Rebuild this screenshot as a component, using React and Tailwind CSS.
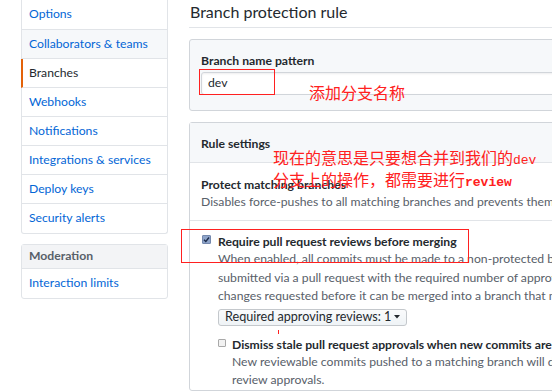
const sideItems = [
  { label: 'Options', first: true },
  { label: 'Collaborators & teams', hover: true },
  { label: 'Branches', active: true },
  { label: 'Webhooks' },
  { label: 'Notifications' },
  { label: 'Integrations & services' },
  { label: 'Deploy keys' },
  { label: 'Security alerts' },
];

const font = { fontFamily: 'Lato, "Noto Sans CJK SC", sans-serif' };

const App = () => {
  return (
    <div
      className="relative w-[552px] h-[391px] overflow-hidden bg-white text-[#24292e] text-[12.2px]"
      style={font}
    >
      <div className="flex">
        {/* sidebar */}
        <div className="ml-[21px] w-[147px] shrink-0">
          <div className="border-x border-b border-[#e1e4e8] rounded-b-[3px]">
            {sideItems.map((item) => (
              <div
                key={item.label}
                className={`${item.first ? 'h-[30px]' : 'h-[29px]'} flex items-center border-b border-[#e1e4e8] last:border-b-0 ${
                  item.active
                    ? 'border-l-2 border-l-[#e36209] -ml-px pl-[6px] text-[#24292e]'
                    : 'pl-[7px] text-[#0366d6]'
                } ${item.hover ? 'bg-[#f6f8fa]' : ''}`}
              >
                {item.label}
              </div>
            ))}
          </div>

          <div className="mt-[10px] border border-[#e1e4e8] rounded-[3px]">
            <div className="h-[24px] flex items-center pl-[7px] bg-[#f3f4f6] border-b border-[#e1e4e8] font-bold text-[#586069]">
              Moderation
            </div>
            <div className="h-[29px] flex items-center pl-[7px] text-[#0366d6]">Interaction limits</div>
          </div>
        </div>

        {/* main */}
        <div className="ml-[21px] w-[420px] shrink-0">
          <div className="h-[28px] border-b border-[#e1e4e8] flex items-end pb-[4px]">
            <h2 className="text-[16px] leading-[22px] ml-px">Branch protection rule</h2>
          </div>

          <div className="mt-[11px] h-[72px] border border-[#d1d5da] rounded-[3px] bg-[#f6f8fa] px-[11px] pt-[13px]">
            <div className="font-bold leading-[16px]">Branch name pattern</div>
            <div className="mt-[3px] h-[23px] bg-white border border-[#d1d5da] rounded-[3px] shadow-[inset_0_1px_2px_rgba(27,31,35,0.075)] flex items-center pl-[6px]">
              dev
            </div>
          </div>

          <div className="mt-[11px] border border-[#d1d5da] rounded-[3px]">
            <div className="h-[40px] bg-[#f6f8fa] border-b border-[#e1e4e8] flex items-center pl-[11px] pt-[4px] font-bold">
              Rule settings
            </div>
            <div className="px-[11px] pt-[13px] pb-[10px] border-b border-[#e1e4e8]">
              <div className="font-bold leading-[17px]">Protect matching branches</div>
              <div className="text-[#586069] leading-[17px] whitespace-nowrap">
                Disables force-pushes to all matching branches and prevents them from being deleted.
              </div>
            </div>
            <div className="pl-[12px] pt-[12px]">
              <div className="flex">
                <div className="mt-[2px] w-[9px] h-[9px] rounded-[1px] bg-[#8ea4c9] border border-[#7488ad] flex items-center justify-center shrink-0">
                  <svg width="7" height="7" viewBox="0 0 7 7">
                    <path d="M1 3.8 L2.8 5.5 L6 1.5" stroke="#1b2b4a" strokeWidth="1.4" fill="none" />
                  </svg>
                </div>
                <div className="ml-[7px]">
                  <div className="font-bold leading-[17px]">Require pull request reviews before merging</div>
                  <div className="text-[#586069] leading-[18.5px] whitespace-nowrap">
                    <div>When enabled, all commits must be made to a non-protected branch and</div>
                    <div>submitted via a pull request with the required number of approving reviews and no</div>
                    <div>changes requested before it can be merged into a branch that matches this rule.</div>
                  </div>
                  <div className="mt-[3px] inline-flex items-center h-[17px] px-[6px] border border-[#c4c8cc] rounded-[3px] bg-gradient-to-b from-[#fafbfc] to-[#eff3f6] text-[#24292e] text-[12.6px]">
                    Required approving reviews: 1
                    <svg className="ml-[3px]" width="6" height="4" viewBox="0 0 6 4">
                      <path d="M0 0 L6 0 L3 3.5 Z" fill="#24292e" />
                    </svg>
                  </div>
                  <div className="mt-[10px] flex">
                    <div className="mt-[3px] w-[8px] h-[8px] rounded-[1px] bg-[#f2f2f2] border border-[#a9a9a9] shrink-0" />
                    <div className="ml-[6px]">
                      <div className="font-bold leading-[17px] whitespace-nowrap">
                        Dismiss stale pull request approvals when new commits are pushed
                      </div>
                      <div className="text-[#586069] leading-[18.5px] whitespace-nowrap">
                        <div>New reviewable commits pushed to a matching branch will dismiss pull request</div>
                        <div>review approvals.</div>
                      </div>
                    </div>
                  </div>
                </div>
              </div>
            </div>
          </div>
        </div>
      </div>

      {/* red annotations */}
      <div className="absolute left-[199px] top-[69px] w-[76px] h-[26px] border border-[#ff2020]" />
      <div className="absolute left-[309px] top-[83px] text-[16px] leading-[20px] text-[#ff2020]">添加分支名称</div>
      <div className="absolute left-[273px] top-[148px] text-[16px] leading-[19px] text-[#ff2020]">
        <div>
          现在的意思是只要想合并到我们的
          <span className="text-[13px]" style={{ fontFamily: '"Liberation Mono", monospace' }}>dev</span>
        </div>
        <div>
          分支上的操作，都需要进行
          <span className="text-[13px] font-bold" style={{ fontFamily: '"Liberation Mono", monospace' }}>review</span>
        </div>
      </div>
      <div className="absolute left-[181px] top-[229px] w-[288px] h-[34px] border border-[#ff2020]" />
      <div className="absolute left-[278px] top-[330px] w-px h-[4px] bg-[#ff2020]" />
    </div>
  );
};

export default App;
